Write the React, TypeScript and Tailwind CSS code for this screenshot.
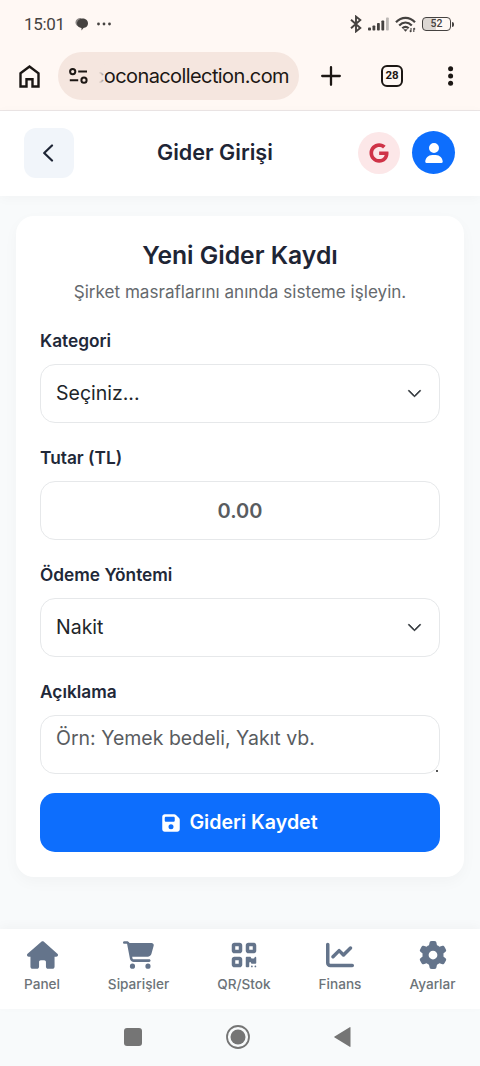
import { FC, ReactNode } from "react";
import { BsChevronDown } from "react-icons/bs";
import {
  FaCartShopping,
  FaChartLine,
  FaFloppyDisk,
  FaGear,
  FaGoogle,
  FaHouse,
  FaQrcode,
  FaUser,
} from "react-icons/fa6";

type FieldProps = {
  label: string;
  children?: ReactNode;
};

const StatusBar: FC = () => {
  return (
    <div className="flex h-12 items-center pl-6 pr-[26px] text-[#454240]">
      <span className="pt-[2px] font-[Roboto] text-[17px] tracking-[-0.3px]">15:01</span>
      <svg className="ml-[10px]" width="14" height="14" viewBox="0 0 14 14">
        <path d="M6 1a5 4.500 0 1 0-1 9l0-1z" fill="#8b8785" />
        <path
          d="M7.500 1.500C10.500 1.500 13 3.500 13 6.300S10.800 11 8.500 11L6.500 13.500V11C4 10.500 2 9 2 6.500S4.500 1.500 7.500 1.500z"
          fill="#454240"
        />
      </svg>
      <svg className="ml-[8px]" width="14" height="4" viewBox="0 0 14 4" fill="#454240">
        <circle cx="1.500" cy="2" r="1.400" />
        <circle cx="7" cy="2" r="1.400" />
        <circle cx="12.500" cy="2" r="1.400" />
      </svg>
      <div className="ml-auto flex items-center">
        <svg width="12" height="18" viewBox="0 0 12 18" fill="none" stroke="#454240" strokeWidth="1.900">
          <path d="M1 4.800 10.300 13 6 16.400V1.600L10.300 5 1 13.200" />
        </svg>
        <svg className="ml-[6px]" width="21" height="14" viewBox="0 0 21 14" fill="#454240">
          <rect x="0" y="10.500" width="3" height="3" rx=".8" />
          <rect x="4.500" y="8.500" width="2.800" height="5" rx=".8" />
          <rect x="9" y="6" width="2.800" height="7.500" rx=".8" />
          <rect x="13.400" y="3.500" width="2.800" height="10" rx=".8" />
          <rect x="18" y="0.500" width="2.800" height="13" rx=".8" fill="#bdb8b5" />
        </svg>
        <svg className="ml-[6px]" width="21" height="17" viewBox="0 0 21 17" fill="none" stroke="#454240" strokeWidth="2.200">
          <path d="M1 6.200C6.500.4 14.500.4 20 6.200" />
          <path d="M4.200 9.400c3.800-3.900 8.800-3.900 12.600 0" />
          <path d="M7.300 12.300c2-2 4.400-2 6.400 0" />
          <path d="M8.300 13.200h4.400l-2.200 2.600z" fill="#454240" stroke="none" />
          <path d="M16 12v4m0 0-1.300-1.300M18.800 16v-4m0 0 1.300 1.300" strokeWidth="1.100" />
        </svg>
        <div className="ml-[6px] flex h-[14px] w-[29px] items-center justify-center rounded-[4px] border-[1.500px] border-[#454240] bg-linear-to-r from-[#dcd7d3] from-50% to-transparent to-50% font-[Roboto] text-[10.500px] font-medium leading-none">
          52
        </div>
        <div className="ml-px h-[5px] w-[2px] rounded-r bg-[#454240]" />
      </div>
    </div>
  );
};

const BrowserBar: FC = () => {
  return (
    <div className="flex h-[62px] items-start pl-[19px] pt-1 text-[#1c1714]">
      <svg className="mt-[13px]" width="21" height="23" viewBox="0 0 21 23" fill="none" stroke="currentColor" strokeWidth="2.400">
        <path d="M1.500 8.300 10.500 1.600l9 6.700v13.200h-6v-7.200h-6v7.200h-6z" />
      </svg>
      <div className="ml-[18px] flex h-[48px] w-[241px] items-center rounded-full bg-[#f5e6df] pl-[11px]">
        <svg width="19" height="16" viewBox="0 0 19 16" fill="none" stroke="currentColor" strokeWidth="2">
          <circle cx="3.700" cy="3.600" r="2.600" />
          <path d="M9.200 3.600H18M.8 12.200h8.400" />
          <circle cx="15" cy="12.200" r="2.600" />
        </svg>
        <div className="relative ml-[9px] flex w-[192px] justify-end overflow-hidden">
          <span className="whitespace-nowrap text-[20px] leading-7 tracking-[-0.600px]">coconacollection.com</span>
          <div className="absolute left-0 top-0 h-full w-[8px] bg-linear-to-r from-[#f5e6df] from-20% to-[#f5e6df]/50" />
        </div>
      </div>
      <svg className="ml-[22px] mt-[14px]" width="20" height="20" viewBox="0 0 20 20" stroke="currentColor" strokeWidth="2.300" strokeLinecap="round">
        <path d="M10 1.200v17.600M1.200 10h17.600" />
      </svg>
      <div className="ml-[40px] mt-[13px] flex h-[22px] w-[22px] items-center justify-center rounded-[6px] border-2 border-current font-[Roboto] text-[11.500px] font-bold leading-none">
        28
      </div>
      <svg className="ml-[45px] mt-[14px]" width="6" height="20" viewBox="0 0 6 20" fill="currentColor">
        <circle cx="2.600" cy="2.700" r="2.500" />
        <circle cx="2.600" cy="10" r="2.500" />
        <circle cx="2.600" cy="17.300" r="2.500" />
      </svg>
    </div>
  );
};

const Header: FC = () => {
  return (
    <header className="relative z-10 flex h-[85px] items-center bg-white pb-[2px] pl-6 pr-[25px] shadow-[0_2px_12px_rgba(0,0,0,0.03)]">
      <button className="flex h-[50px] w-[50px] items-center justify-center rounded-[12px] bg-[#f1f5fa]">
        <svg
          className="-ml-[2px]"
          width="12"
          height="18"
          viewBox="0 0 12 18"
          fill="none"
          stroke="#1e2535"
          strokeWidth="2.200"
          strokeLinecap="round"
          strokeLinejoin="round"
        >
          <path d="M10 1.500 2.200 9l7.800 7.500" />
        </svg>
      </button>
      <h1 className="ml-[83px] text-[21.600px] font-semibold text-[#1e2535]">Gider Girişi</h1>
      <div className="ml-auto flex items-center gap-3">
        <div className="flex h-[42px] w-[42px] items-center justify-center rounded-full bg-[#fce7e8]">
          <FaGoogle className="text-[20px] text-[#cf3347]" />
        </div>
        <div className="flex h-[43px] w-[43px] items-center justify-center rounded-full bg-[#0d6efd]">
          <FaUser className="text-[20px] text-white" />
        </div>
      </div>
    </header>
  );
};

const Field: FC<FieldProps> = ({ label, children }) => {
  return (
    <div className="mb-[20px]">
      <div className="mb-[9px] text-[17.300px] font-semibold leading-[29.200px] text-[#212838]">{label}</div>
      {children}
    </div>
  );
};

const Select: FC<{ value: string }> = ({ value }) => {
  return (
    <div className="flex h-[59px] items-center justify-between rounded-[15px] border border-[#e6e8ea] pl-[15px] pr-[17px] text-[19.500px] text-[#212529]">
      {value}
      <BsChevronDown className="text-[15px] text-[#2b3035]" strokeWidth={0.8} />
    </div>
  );
};

const tabs = [
  { label: "Panel", width: "w-[84px]", icon: <FaHouse className="h-[28px] w-[31px]" /> },
  { label: "Siparişler", width: "w-[109px]", icon: <FaCartShopping className="h-[28px] w-[31px]" /> },
  { label: "QR/Stok", width: "w-[102px]", icon: <FaQrcode className="h-[28px] w-[28px]" /> },
  { label: "Finans", width: "w-[90px]", icon: <FaChartLine className="h-[28px] w-[28px]" /> },
  { label: "Ayarlar", width: "w-[95px]", icon: <FaGear className="h-[28px] w-[28px]" /> },
];

const App: FC = () => {
  return (
    <div className="flex h-[1066px] w-[480px] flex-col overflow-hidden bg-[#f8fafb] font-[Inter,sans-serif]">
      <div className="h-[111px] shrink-0 border-b border-[#ebe5e5] bg-[#fff8f4]">
        <StatusBar />
        <BrowserBar />
      </div>
      <Header />

      <main className="flex-1 px-4 pt-5">
        <div className="h-[661px] rounded-[18px] bg-white px-6 pt-5 shadow-[0_5px_15px_rgba(0,0,0,0.03)]">
          <h2 className="text-center text-[24.700px] font-semibold leading-[38px] text-[#1e2535]">
            Yeni Gider Kaydı
          </h2>
          <p className="mb-[15.600px] text-center text-[17.100px] leading-9 text-[#65696d]">
            Şirket masraflarını anında sisteme işleyin.
          </p>
          <Field label="Kategori">
            <Select value="Seçiniz..." />
          </Field>
          <Field label="Tutar (TL)">
            <div className="flex h-[59px] items-center justify-center rounded-[15px] border border-[#e6e8ea] text-[20px] font-semibold text-[#595c5f]">
              0.00
            </div>
          </Field>
          <Field label="Ödeme Yöntemi">
            <Select value="Nakit" />
          </Field>
          <Field label="Açıklama">
            <div className="relative h-[59px] rounded-[15px] border border-[#e6e8ea] pl-[15px] pt-[7px] text-[19.500px] leading-[30px] text-[#595c5f]">
              Örn: Yemek bedeli, Yakıt vb.
              <span className="absolute bottom-px right-px h-[2px] w-[2px] bg-[#555]" />
            </div>
          </Field>
          <button className="-mt-px flex h-[59px] w-full items-center justify-center gap-[8px] rounded-[15px] bg-[#0d6efd] pr-px text-[19.600px] font-semibold text-white">
            <FaFloppyDisk className="text-[20px]" />
            Gideri Kaydet
          </button>
        </div>
      </main>

      <nav className="flex h-[80px] shrink-0 bg-white pt-3 shadow-[0_-3px_10px_rgba(0,0,0,0.03)]">
        {tabs.map((tab) => (
          <div key={tab.label} className={`flex flex-col items-center text-[#64748b] ${tab.width}`}>
            {tab.icon}
            <span className="mt-[5px] text-[13.600px] font-medium leading-5 text-[#6c7378]">{tab.label}</span>
          </div>
        ))}
      </nav>

      {/* android navigation */}
      <div className="flex h-[57px] shrink-0 items-center pb-[2px] pl-[124px] text-[#757575]">
        <div className="h-[18px] w-[18px] rounded-[3px] bg-current" />
        <svg className="ml-[84px]" width="24" height="24" viewBox="0 0 24 24" fill="none" stroke="currentColor" strokeWidth="1.800">
          <circle cx="12" cy="12" r="11" />
          <circle cx="12" cy="12" r="7.500" fill="currentColor" stroke="none" />
        </svg>
        <svg className="ml-[84px]" width="17" height="20" viewBox="0 0 17 20" fill="currentColor">
          <path d="M16.500.6v18.800a.5.500 0 0 1-.8.300L.6 10.600a.7.700 0 0 1 0-1.200L15.700.300a.5.500 0 0 1 .8.300z" />
        </svg>
      </div>
    </div>
  );
};

export default App;
